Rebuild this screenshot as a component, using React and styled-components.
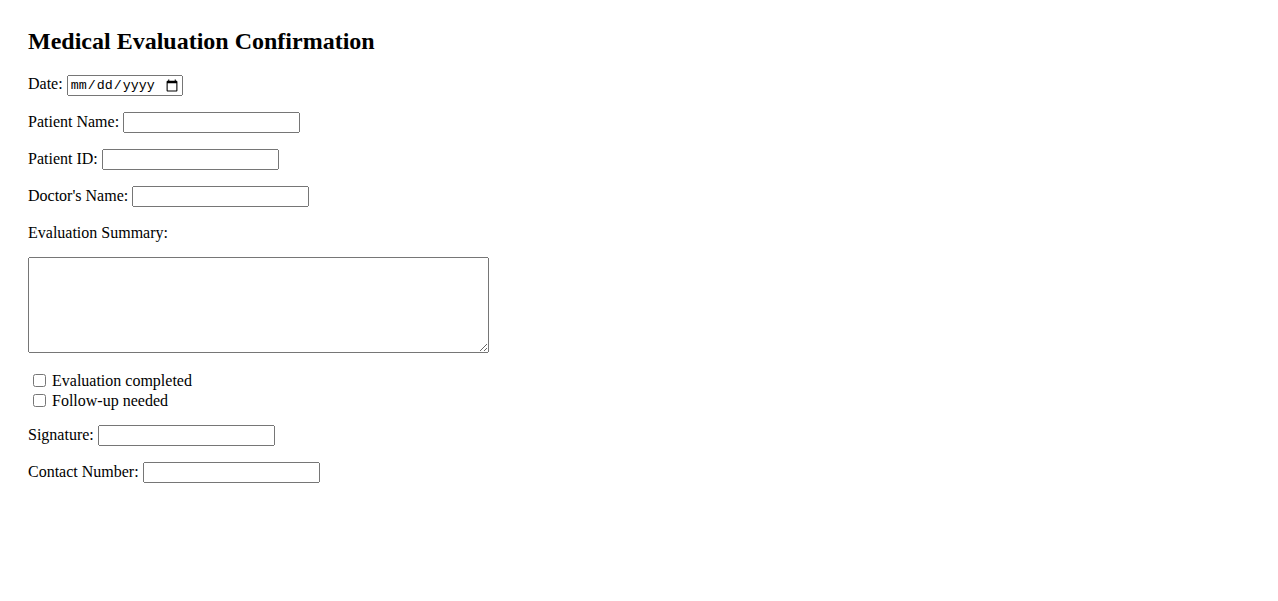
import React from 'react';
import styled, { createGlobalStyle } from 'styled-components';

const GlobalStyle = createGlobalStyle`
    body {
        margin: 0;
        background: #fff;
        font-family: "Liberation Serif", "Times New Roman", serif;
        font-size: 16px;
        color: #000;
    }
`

const Page = styled.div`
    padding: 28px;
`

const Title = styled.h2`
    font-size: 24px;
    font-weight: bold;
    margin: 0 0 19px 0;
    line-height: 26px;
`

const Field = styled.div`
    margin-bottom: ${props => props.$gap ?? 15}px;
    line-height: 22px;
`

const Label = styled.label`
    display: ${props => props.$block ? 'block' : 'inline'};
    margin-bottom: ${props => props.$block ? '13px' : '0'};
`

const TextInput = styled.input`
    box-sizing: border-box;
    width: ${props => props.$width || 177}px;
    font-family: ${props => props.$mono ? '"Liberation Mono", monospace' : '"Liberation Sans", Arial, sans-serif'};
    font-size: 13.33px;
    margin-left: 4px;
`

const Summary = styled.textarea`
    display: block;
    box-sizing: border-box;
    width: 461px;
    height: 96px;
    margin: 0;
    font-family: "Liberation Mono", monospace;
    font-size: 13.33px;
`

const Checks = styled.div`
    margin-top: 18px;
    margin-bottom: 13px;
    line-height: 20px;
`

const CheckRow = styled.label`
    display: block;
`

const Box = styled.input`
    margin: 3px 6px 3px 5px;
    vertical-align: -1px;
`

function App() {
    return (
        <>
            <GlobalStyle />
            <Page>
                <Title>Medical Evaluation Confirmation</Title>
                <form>
                    <Field>
                        <Label>Date:</Label>
                        <TextInput type="date" $mono $width={116} />
                    </Field>
                    <Field>
                        <Label>Patient Name:</Label>
                        <TextInput type="text" />
                    </Field>
                    <Field>
                        <Label>Patient ID:</Label>
                        <TextInput type="text" />
                    </Field>
                    <Field>
                        <Label>Doctor's Name:</Label>
                        <TextInput type="text" />
                    </Field>
                    <Field $gap={0}>
                        <Label $block>Evaluation Summary:</Label>
                        <Summary />
                    </Field>
                    <Checks>
                        <CheckRow><Box type="checkbox" />Evaluation completed</CheckRow>
                        <CheckRow><Box type="checkbox" />Follow-up needed</CheckRow>
                    </Checks>
                    <Field>
                        <Label>Signature:</Label>
                        <TextInput type="text" />
                    </Field>
                    <Field>
                        <Label>Contact Number:</Label>
                        <TextInput type="text" />
                    </Field>
                </form>
            </Page>
        </>
    );
}

export default App;
